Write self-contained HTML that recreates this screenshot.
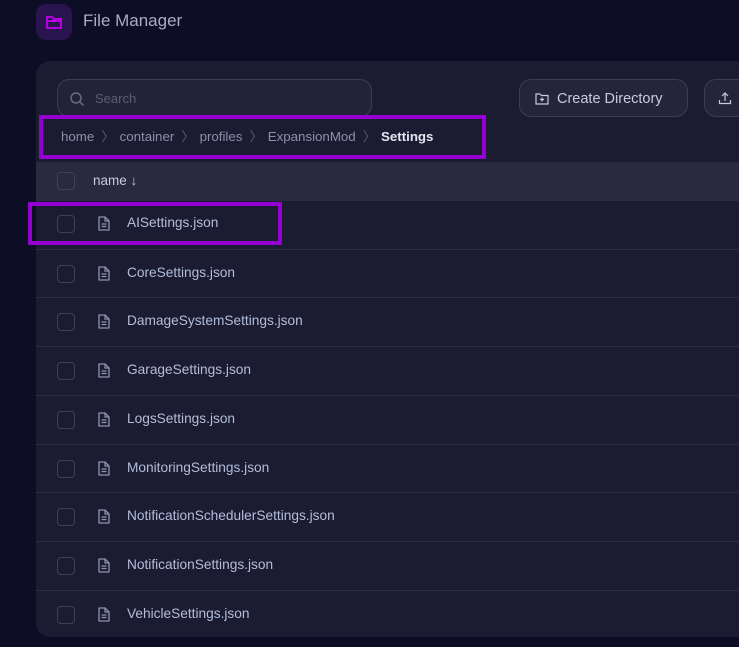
<!DOCTYPE html>
<html><head><meta charset="utf-8"><style>
*{box-sizing:border-box;margin:0;padding:0}
body{width:739px;height:647px;overflow:hidden;background:#0d0e26;font-family:"Liberation Sans",sans-serif;position:relative}
.abs{position:absolute}
.logo{left:36px;top:4px;width:36px;height:36px;border-radius:10px;background:#2a1450}
.title{left:83px;top:11px;color:#a9abc8;font-size:17px}
.panel{left:36px;top:61px;width:720px;height:576px;background:#1b1b31;border-radius:14px;overflow:hidden}
.search{left:57px;top:79px;width:315px;height:38px;border:1px solid #3c3d55;border-radius:12px;background:#232338}
.search span{position:absolute;left:37px;top:11px;color:#5c5e78;font-size:13px}
.btn{top:79px;height:38px;border:1px solid #3c3d55;border-radius:12px;background:#25253a;color:#c8cade;font-size:14.5px}
.bc{left:61px;top:126px;font-size:13.3px;color:#8e90aa;white-space:nowrap}
.bc b{color:#e4e5f0}
.bc i{font-style:normal;color:#5c5e78;margin:0 5px 0 7px}
.hdr{left:36px;top:162px;width:720px;height:39px;background:#292a40}
.cb{width:18px;height:18px;border:1px solid #3f4058;border-radius:4px;position:absolute;left:57px}
.row{left:36px;width:720px;height:49px;border-top:1px solid #2c2d44}
.fn{position:absolute;left:127px;color:#b3bedb;font-size:13.7px}
.pbox{border:4px solid #9400d0}
</style></head><body>
<div class="abs logo"><svg width="36" height="36" viewBox="0 0 36 36"><path d="M11 13h5l2 2h7v9H11z" fill="none" stroke="#b400e0" stroke-width="2" stroke-linejoin="round"/><path d="M11 17h14" stroke="#b400e0" stroke-width="2"/></svg></div>
<div class="abs title">File Manager</div>
<div class="abs panel"></div>
<div class="abs search"><svg class="abs" style="left:11px;top:11px" width="16" height="16" viewBox="0 0 16 16"><circle cx="7" cy="7" r="5" fill="none" stroke="#6b6d88" stroke-width="1.4"/><path d="M10.5 10.5l4 4" stroke="#6b6d88" stroke-width="1.4"/></svg><span>Search</span></div>
<div class="abs btn" style="left:519px;width:169px"><svg class="abs" style="left:15px;top:12px" width="14" height="13" viewBox="0 0 14 13"><path d="M1 2h4l1.5 1.5H13V12H1z" fill="none" stroke="#c8cade" stroke-width="1.2"/><path d="M7 5.5v4M5 7.5h4" stroke="#c8cade" stroke-width="1.2"/></svg><span class="abs" style="left:37px;top:11px">Create Directory</span></div>
<div class="abs btn" style="left:704px;width:60px"><svg class="abs" style="left:13px;top:11px" width="14" height="14" viewBox="0 0 14 14"><path d="M7 10V2M4 5l3-3 3 3M1.5 9v3.5h11V9" fill="none" stroke="#c8cade" stroke-width="1.2"/></svg></div>
<div class="abs bc">home<i>〉</i>container<i>〉</i>profiles<i>〉</i>ExpansionMod<i>〉</i><b>Settings</b></div>
<div class="abs pbox" style="left:39px;top:115px;width:447px;height:44px"></div>
<div class="abs hdr"><div class="cb" style="left:21px;top:10px"></div><span class="abs" style="left:57px;top:11px;color:#c8cade;font-size:13.5px">name ↓</span></div>
<div id="rows"></div>
<script>
var n=["AISettings.json","CoreSettings.json","DamageSystemSettings.json","GarageSettings.json","LogsSettings.json","MonitoringSettings.json","NotificationSchedulerSettings.json","NotificationSettings.json","VehicleSettings.json"];
var h="";n.forEach(function(t,i){var y=200+i*48.7;h+='<div class="abs row" style="top:'+y+'px;'+(i==0?'border-top:none':'')+'"><div class="cb" style="left:21px;top:15px"></div><svg class="abs" style="left:62px;top:16px" width="12" height="15" viewBox="0 0 12 15"><path d="M1 1h6l4 4v9H1z" fill="none" stroke="#8f94b0" stroke-width="1.3" stroke-linejoin="round"/><path d="M7 1v4h4M3.5 8h5M3.5 10.5h5" fill="none" stroke="#8f94b0" stroke-width="1.2"/></svg><span class="fn" style="left:91px;top:15px">'+t+'</span></div>';});
document.getElementById("rows").innerHTML=h;
</script>
<div class="abs pbox" style="left:28px;top:202px;width:254px;height:43px"></div>
</body></html>
